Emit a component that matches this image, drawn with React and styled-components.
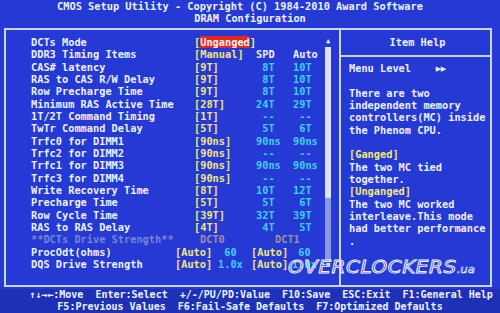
import styled, { createGlobalStyle } from 'styled-components'

const GlobalStyle = createGlobalStyle`
  html, body {
    margin: 0;
    padding: 0;
    background: #1f33c4;
  }
  body {
    width: 500px;
    height: 313px;
    overflow: hidden;
  }
`

const colors = {
  blue: '#2539d4',
  footer: '#1e31b6',
  line: '#cdd5f5',
  white: '#eef1ff',
  yellow: '#f4e874',
  cyan: '#40d0f2',
  red: '#e4261f',
  dim: '#7a86cf',
  dimValue: '#a0929c',
}

const Screen = styled.div`
  position: relative;
  width: 500px;
  height: 313px;
  display: flex;
  flex-direction: column;
  background: ${colors.blue};
  font-family: 'DejaVu Sans Mono', 'Liberation Mono', monospace;
  font-weight: bold;
  font-size: 10.3px;
  line-height: 12.35px;
  color: ${colors.white};
  overflow: hidden;
`

const Header = styled.div`
  height: 28px;
  display: flex;
  flex-direction: column;
  align-items: center;
  line-height: 12px;
`

const TitleLine = styled.div`
  white-space: pre;
  padding-right: ${(p) => p.$shift || 0}px;
`

const Frame = styled.div`
  display: flex;
  width: 484px;
  height: 256px;
  margin-left: 4px;
  border: 2px solid ${colors.line};
`

const LeftPane = styled.div`
  display: flex;
  width: 333px;
  padding-top: 6px;
  box-sizing: border-box;
`

const List = styled.div`
  flex: 1;
  padding-left: 25px;
`

const Row = styled.div`
  display: grid;
  grid-template-columns: ${(p) => p.$cols || '163px 62px 37px 1fr'};
  height: 12.35px;
  white-space: pre;
`

const Label = styled.span`
  color: ${(p) => (p.$dim ? colors.dim : colors.white)};
`

const Setting = styled.span`
  color: ${colors.yellow};
`

const Highlight = styled.span`
  background: ${colors.red};
  color: #fff4f0;
`

const Value = styled.span`
  color: ${(p) => (p.$head ? colors.white : p.$dim ? colors.dimValue : colors.cyan)};
`

const ScrollColumn = styled.div`
  width: 6px;
  margin-right: 8px;
  display: flex;
  flex-direction: column;
  align-items: center;
`

const Arrow = styled.div`
  font-size: 7px;
  line-height: 10px;
  height: 10px;
  color: ${colors.white};
`

const Track = styled.div`
  width: 6px;
  height: 213px;
  margin-top: 1px;
  display: flex;
  flex-direction: column;
  background: #8a98e6;
`

const Thumb = styled.div`
  height: 151px;
  background: #dfe4f7;
`

const RightPane = styled.div`
  flex: 1;
  display: flex;
  flex-direction: column;
  border-left: 2px solid ${colors.line};
`

const HelpTitle = styled.div`
  height: 25px;
  display: flex;
  align-items: center;
  justify-content: center;
  padding-left: 4px;
  border-bottom: 2px solid ${colors.line};
`

const HelpBody = styled.div`
  padding: 5px 0 0 8px;
`

const HelpLine = styled.div`
  height: 12.35px;
  white-space: pre;
  color: ${(p) => (p.$accent ? colors.yellow : colors.white)};
`

const Marker = styled.span`
  font-family: 'DejaVu Sans', sans-serif;
  font-size: 7px;
  letter-spacing: -0.5px;
  vertical-align: 1px;
`

const Footer = styled.div`
  flex: 1;
  margin-top: 2px;
  display: flex;
  flex-direction: column;
  align-items: center;
  background: ${colors.footer};
  font-size: 10px;
  line-height: 12px;
`

const FooterLine = styled.div`
  white-space: pre;
  padding-left: ${(p) => p.$shift || 0}px;
`

const Watermark = styled.div`
  position: absolute;
  left: 288px;
  top: 258px;
  font-family: 'DejaVu Sans', sans-serif;
  font-style: italic;
  font-weight: normal;
  font-size: 17px;
  line-height: 18px;
  letter-spacing: 0.5px;
  white-space: pre;
  color: rgba(60, 80, 190, 0.4);
  -webkit-text-stroke: 0.9px #f2f4ff;
  transform: scaleX(1.17);
  transform-origin: left center;
`

const WatermarkSuffix = styled.span`
  font-size: 10px;
  letter-spacing: 0;
  -webkit-text-stroke: 0.5px #f2f4ff;
`

const timings = [
  ['CAS# latency', '[9T]', ' 8T', '10T'],
  ['RAS to CAS R/W Delay', '[9T]', ' 8T', '10T'],
  ['Row Precharge Time', '[9T]', ' 8T', '10T'],
  ['Minimum RAS Active Time', '[28T]', '24T', '29T'],
  ['1T/2T Command Timing', '[1T]', ' --', ' --'],
  ['TwTr Command Delay', '[5T]', ' 5T', ' 6T'],
  ['Trfc0 for DIMM1', '[90ns]', '90ns', '90ns'],
  ['Trfc2 for DIMM2', '[90ns]', ' --', ' --'],
  ['Trfc1 for DIMM3', '[90ns]', '90ns', '90ns'],
  ['Trfc3 for DIMM4', '[90ns]', ' --', ' --'],
  ['Write Recovery Time', '[8T]', '10T', '12T'],
  ['Precharge Time', '[5T]', ' 5T', ' 6T'],
  ['Row Cycle Time', '[39T]', '32T', '39T'],
  ['RAS to RAS Delay', '[4T]', ' 4T', ' 5T'],
]

const drive = [
  ['ProcOdt(ohms)', '[Auto]', ' 60', '[Auto]', ' 60'],
  ['DQS Drive Strength', '[Auto]', '1.0x', '[Auto]', '1.0x'],
]

const help = [
  { text: 'Menu Level    ', marker: true },
  { text: '' },
  { text: 'There are two' },
  { text: 'independent memory' },
  { text: 'controllers(MC) inside' },
  { text: 'the Phenom CPU.' },
  { text: '' },
  { text: '[Ganged]', accent: true },
  { text: 'The two MC tied' },
  { text: 'together.' },
  { text: '[Unganged]', accent: true },
  { text: 'The two MC worked' },
  { text: 'interleave.This mode' },
  { text: 'had better performance' },
  { text: '.' },
]

function App() {
  return (
    <Screen>
      <GlobalStyle />
      <Header>
        <TitleLine $shift={20}>CMOS Setup Utility - Copyright (C) 1984-2010 Award Software</TitleLine>
        <TitleLine>DRAM Configuration</TitleLine>
      </Header>

      <Frame>
        <LeftPane>
          <List>
            <Row>
              <Label>DCTs Mode</Label>
              <Setting>
                [<Highlight>Unganged</Highlight>]
              </Setting>
            </Row>
            <Row>
              <Label>DDR3 Timing Items</Label>
              <Setting>[Manual]</Setting>
              <Value $head>SPD</Value>
              <Value $head>Auto</Value>
            </Row>
            {timings.map(([label, setting, spd, auto]) => (
              <Row key={label}>
                <Label>{label}</Label>
                <Setting>{setting}</Setting>
                <Value>{spd}</Value>
                <Value>{auto}</Value>
              </Row>
            ))}
            <Row $cols="169px 75px 1fr">
              <Label $dim>**DCTs Drive Strength**</Label>
              <Value $dim>DCT0</Value>
              <Value $dim>DCT1</Value>
            </Row>
            {drive.map(([label, a, av, b, bv]) => (
              <Row key={label} $cols="144px 43px 33px 41px 1fr">
                <Label>{label}</Label>
                <Setting>{a}</Setting>
                <Value>{av}</Value>
                <Setting>{b}</Setting>
                <Value>{bv}</Value>
              </Row>
            ))}
          </List>
          <ScrollColumn>
            <Arrow>▲</Arrow>
            <Track>
              <Thumb />
            </Track>
            <Arrow>▼</Arrow>
          </ScrollColumn>
        </LeftPane>

        <RightPane>
          <HelpTitle>Item Help</HelpTitle>
          <HelpBody>
            {help.map((line, i) => (
              <HelpLine key={i} $accent={line.accent}>
                {line.text}
                {line.marker && <Marker>▶▶</Marker>}
              </HelpLine>
            ))}
          </HelpBody>
        </RightPane>
      </Frame>

      <Footer>
        <FooterLine $shift={22}>↑↓→←:Move  Enter:Select  +/-/PU/PD:Value  F10:Save  ESC:Exit  F1:General Help</FooterLine>
        <FooterLine>F5:Previous Values  F6:Fail-Safe Defaults  F7:Optimized Defaults</FooterLine>
      </Footer>

      <Watermark>
        OVERCLOCKERS<WatermarkSuffix>.ua</WatermarkSuffix>
      </Watermark>
    </Screen>
  )
}

export default App
